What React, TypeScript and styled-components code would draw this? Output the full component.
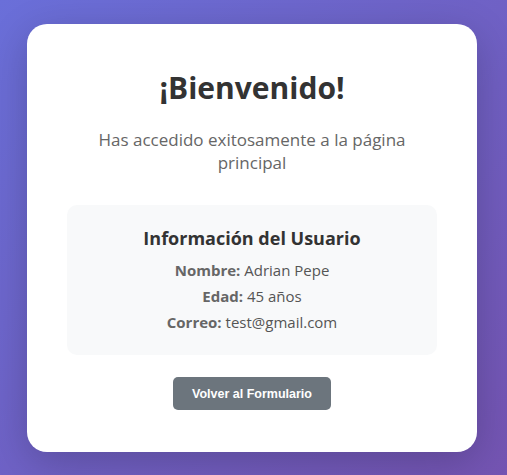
import styled, { createGlobalStyle } from 'styled-components'

const GlobalStyle = createGlobalStyle`
  * {
    box-sizing: border-box;
  }

  html, body {
    margin: 0;
    padding: 0;
  }

  body {
    font-family: 'Open Sans', 'Noto Sans', sans-serif;
    background: linear-gradient(135deg, #6a6fd9 0%, #7454b2 100%);
    min-height: 100vh;
  }
`

const user = {
  nombre: 'Adrian Pepe',
  edad: 45,
  correo: 'test@gmail.com'
}

const App = () => {
  return (
    <>
      <GlobalStyle />
      <Page>
        <Card>
          <Title>¡Bienvenido!</Title>
          <Subtitle>Has accedido exitosamente a la página principal</Subtitle>
          <InfoBox>
            <InfoTitle>Información del Usuario</InfoTitle>
            <InfoLine>
              <strong>Nombre:</strong> {user.nombre}
            </InfoLine>
            <InfoLine>
              <strong>Edad:</strong> {user.edad} años
            </InfoLine>
            <InfoLine>
              <strong>Correo:</strong> {user.correo}
            </InfoLine>
          </InfoBox>
          <BackButton type="button">Volver al Formulario</BackButton>
        </Card>
      </Page>
    </>
  )
}

export default App

const Page = styled.div`
  min-height: 100vh;
  display: flex;
  align-items: center;
  justify-content: center;
  padding: 24px 30px 23px 27px;
`

const Card = styled.div`
  width: 450px;
  background: #fff;
  border-radius: 20px;
  padding: 40px 40px 42px;
  text-align: center;
  box-shadow: 0 10px 40px rgba(0, 0, 0, 0.2);
`

const Title = styled.h1`
  margin: 0 0 16px;
  font-size: 30px;
  line-height: 48px;
  font-weight: 700;
  color: #333;
`

const Subtitle = styled.p`
  margin: 0 0 31px;
  font-size: 17px;
  line-height: 23px;
  color: #666;
`

const InfoBox = styled.div`
  background: #f8f9fa;
  border-radius: 10px;
  padding: 20px;
  margin-bottom: 22px;
`

const InfoTitle = styled.h3`
  margin: 0 0 6px;
  font-size: 18px;
  line-height: 26px;
  font-weight: 700;
  color: #333;
`

const InfoLine = styled.p`
  margin: 0;
  font-size: 15px;
  line-height: 26px;
  color: #555;

  & strong {
    color: #666;
  }
`

const BackButton = styled.button`
  height: 33px;
  padding: 0 19px;
  background: #6c757d;
  color: #fff;
  border: none;
  border-radius: 5px;
  font-family: 'Liberation Sans', Arial, sans-serif;
  font-size: 12.5px;
  font-weight: 700;
  cursor: pointer;
`
